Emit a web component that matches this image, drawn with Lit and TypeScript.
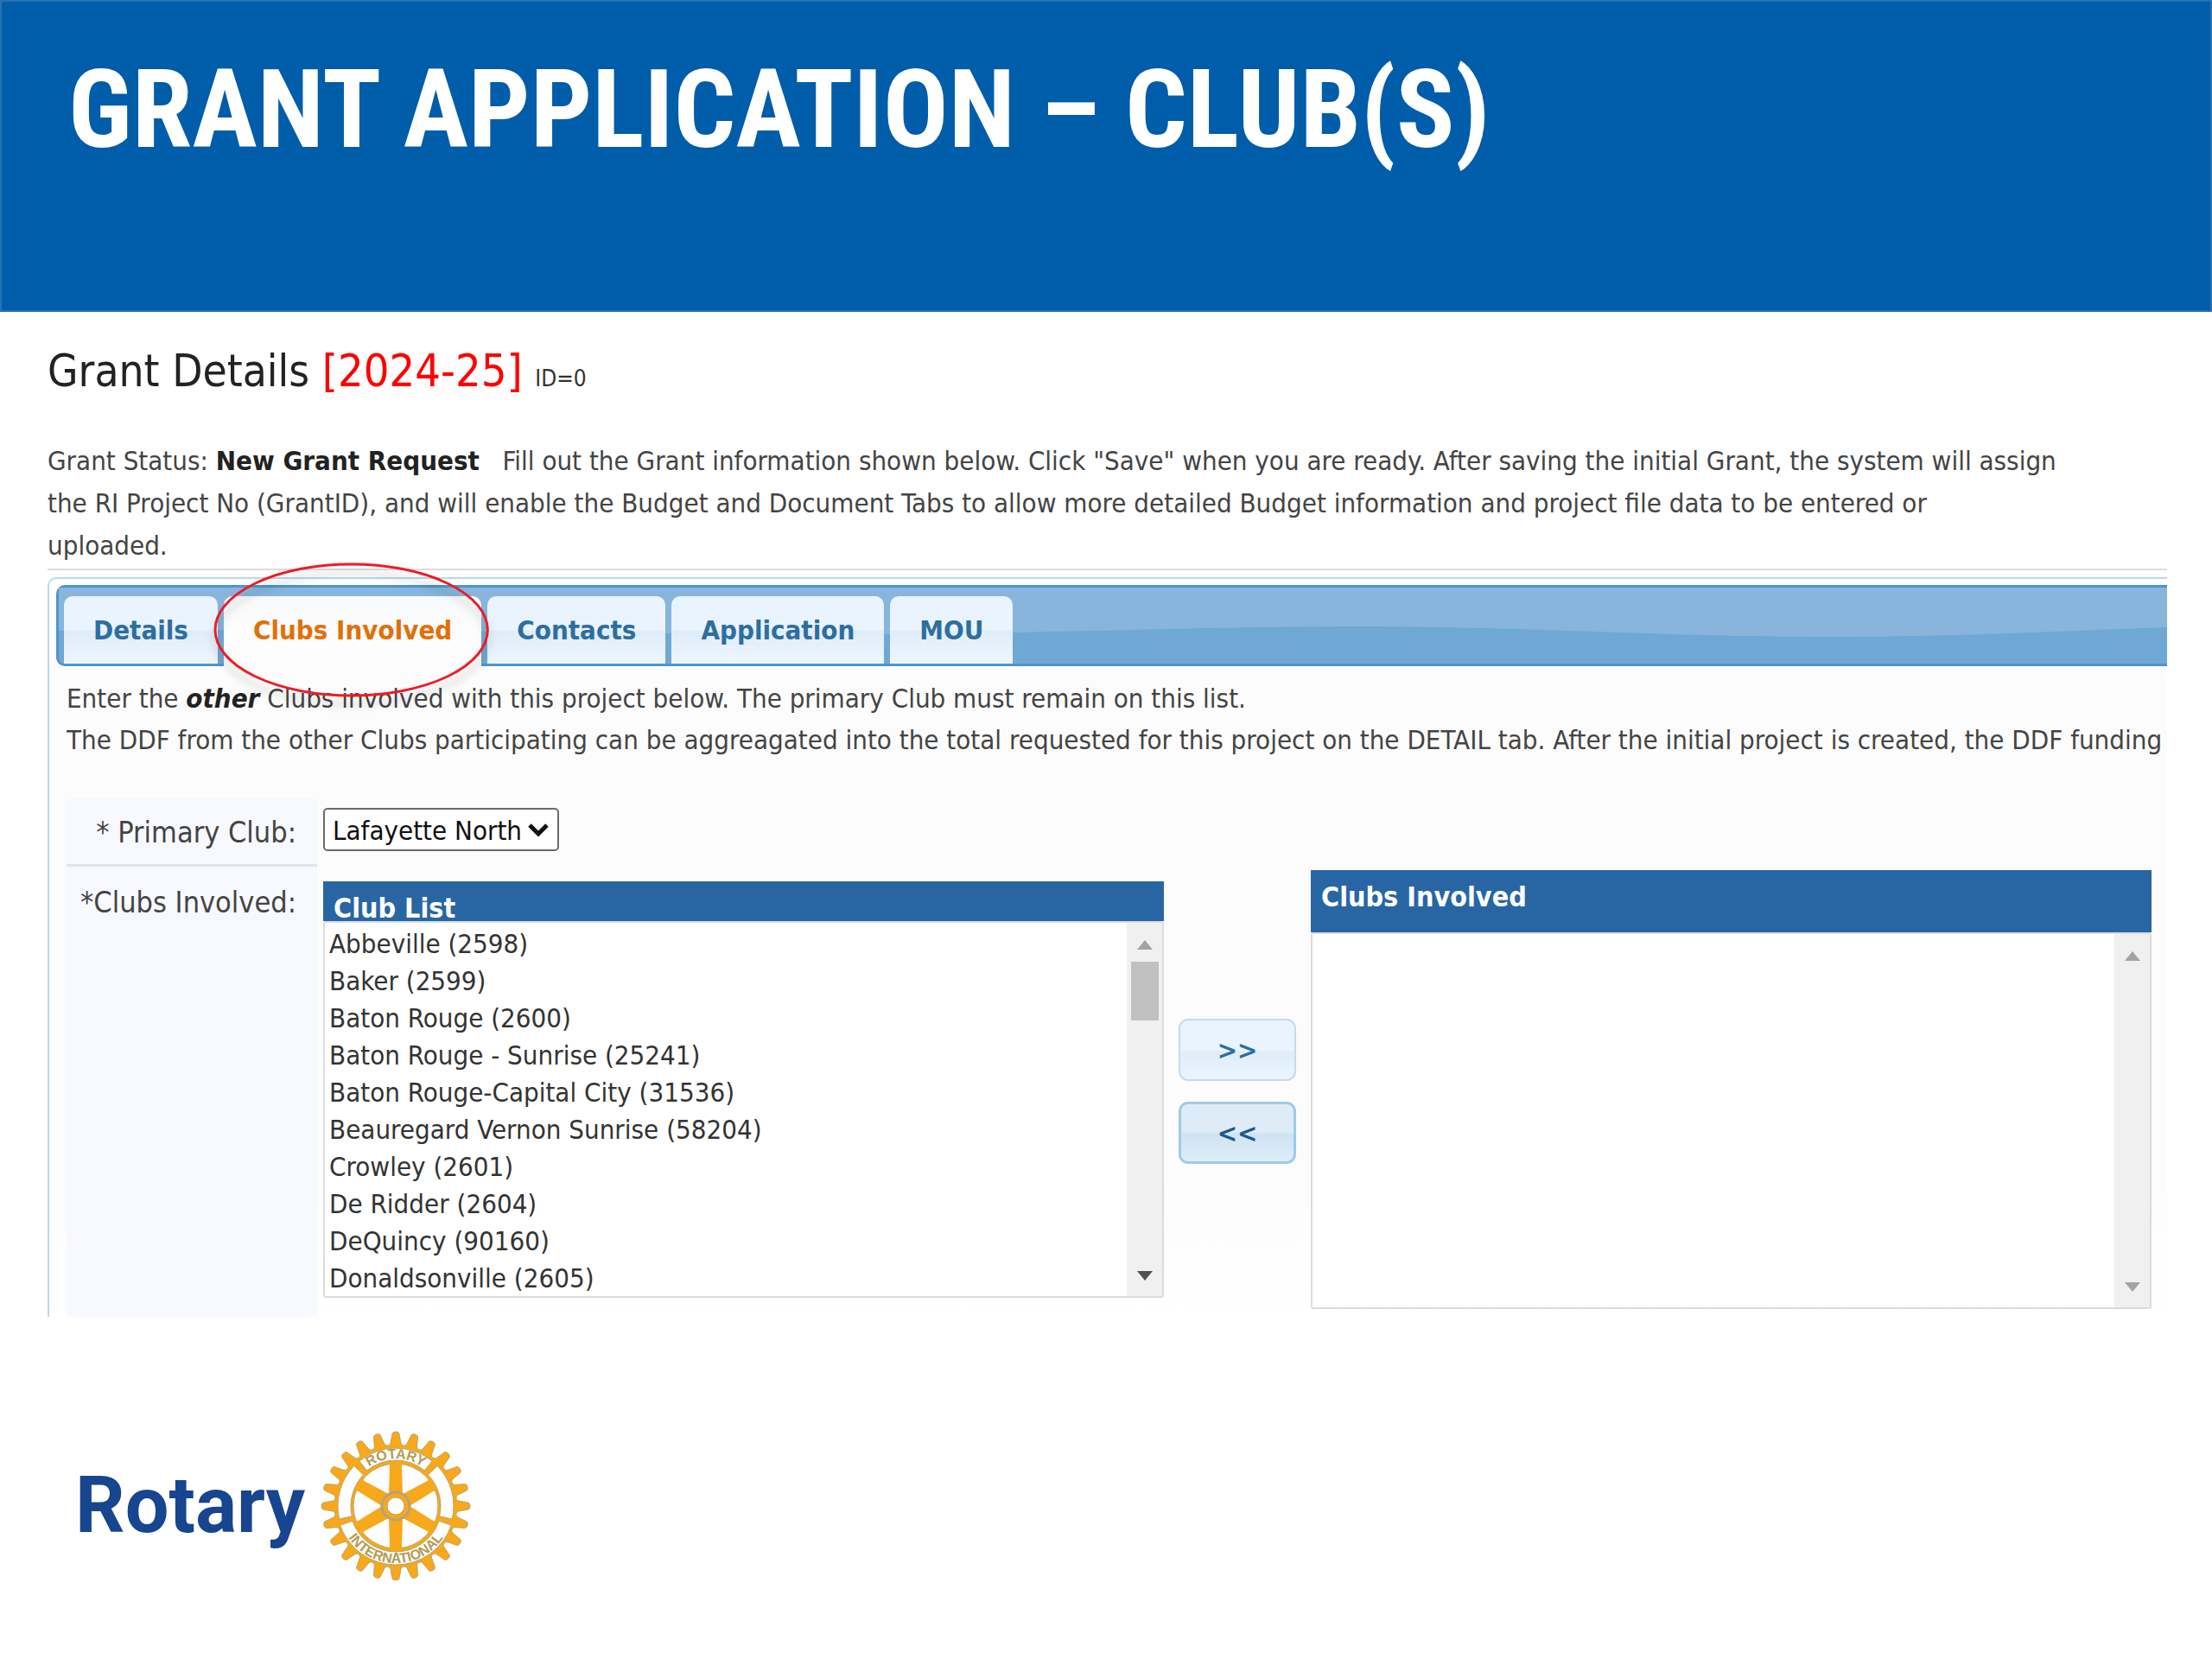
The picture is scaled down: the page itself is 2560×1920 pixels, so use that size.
import { LitElement, html, svg, css } from "lit";
import { customElement, property, state } from "lit/decorators.js";
import { classMap } from "lit/directives/class-map.js";

const CLUBS = [
  "Abbeville (2598)",
  "Baker (2599)",
  "Baton Rouge (2600)",
  "Baton Rouge - Sunrise (25241)",
  "Baton Rouge-Capital City (31536)",
  "Beauregard Vernon Sunrise (58204)",
  "Crowley (2601)",
  "De Ridder (2604)",
  "DeQuincy (90160)",
  "Donaldsonville (2605)",
];

const TABS = ["Details", "Clubs Involved", "Contacts", "Application", "MOU"];

/** Point on a circle around the wheel's centre; degrees run clockwise from the top. */
const polar = (r: number, deg: number): string => {
  const a = (deg * Math.PI) / 180;
  return `${(r * Math.sin(a)).toFixed(2)} ${(-r * Math.cos(a)).toFixed(2)}`;
};

/** Annular sector between two radii and two angles. */
const band = (r1: number, r2: number, from: number, to: number): string => {
  const large = to - from > 180 ? 1 : 0;
  return `M${polar(r2, from)}A${r2} ${r2} 0 ${large} 1 ${polar(r2, to)}L${polar(r1, to)}A${r1} ${r1} 0 ${large} 0 ${polar(r1, from)}Z`;
};

const gearOutline = (): string => {
  let d = "";
  for (let i = 0; i < 24; i++) {
    const c = i * 15;
    d += `${i ? "L" : "M"}${polar(72, c - 5)}L${polar(82, c - 3)}Q${polar(86, c - 3)} ${polar(86, c)}Q${polar(86, c + 3)} ${polar(82, c + 3)}L${polar(72, c + 5)}Q${polar(69, c + 7.5)} ${polar(72, c + 10)}`;
  }
  return d + "Z";
};

@customElement("rotary-logo")
export class RotaryLogo extends LitElement {
  static styles = css`
    :host {
      display: flex;
      align-items: center;
      gap: 19px;
    }
    .word {
      font: 700 90px/100px Roboto, "Open Sans", sans-serif;
      color: #17458f;
    }
    .wheel {
      width: 172px;
      height: 172px;
      overflow: visible;
    }
    .gold {
      fill: #f7a81b;
      stroke: #b9a56c;
    }
    .white {
      fill: #fff;
      stroke: #b9a56c;
    }
    .spoke {
      fill: #f7a81b;
    }
    .ring {
      fill: #f7a81b;
      stroke: #b3a47c;
      stroke-width: 3px;
    }
    .arc {
      fill: none;
    }
    .letters {
      font: 700 16px "Liberation Sans", Arial, sans-serif;
      fill: #b39c52;
    }
  `;

  render() {
    return html`
      <span class="word">Rotary</span>
      <svg class="wheel" viewBox="-86 -86 172 172" role="img" aria-label="Rotary International">
        <path class="gold" d=${gearOutline()} />
        <path class="white" d=${band(53, 67, -39, 39)} />
        <path class="white" d=${band(52, 67, 46, 103)} />
        <path class="white" d=${band(52, 67, -103, -46)} />
        <path class="white" d=${band(53, 68, 109, 251)} />
        <circle class="white" r="49" />
        ${[0, 60, 120, 180, 240, 300].map(
          (a) => svg`<path class="spoke" transform="rotate(${a})" d="M-8 -12L-7 -46Q-7 -49 -10 -50L10 -50Q7 -49 7 -46L8 -12Z" />`
        )}
        <circle class="ring" r="16" />
        <circle class="white" r="10" />
        <path class="arc" id="top" d="M${polar(55, -60)}A55 55 0 0 1 ${polar(55, 60)}" />
        <path class="arc" id="bottom" d="M${polar(66, 260)}A66 66 0 0 0 ${polar(66, 100)}" />
        <text class="letters" text-anchor="middle"><textPath href="#top" startOffset="50%">ROTARY</textPath></text>
        <text class="letters" text-anchor="middle"><textPath href="#bottom" startOffset="50%">INTERNATIONAL</textPath></text>
      </svg>
    `;
  }
}

@customElement("club-list")
export class ClubList extends LitElement {
  @property() heading = "";
  @property({ type: Boolean }) tall = false;
  @property({ attribute: false }) clubs: string[] = [];

  static styles = css`
    :host {
      display: block;
      flex: 1;
      min-width: 0;
      font-family: "DejaVu Sans Condensed", Tahoma, "Noto Sans", sans-serif;
    }
    .heading {
      display: block;
      box-sizing: border-box;
      height: 46px;
      padding: 14px 12px 0;
      background: #2866a3;
      color: #fff;
      font-weight: 700;
      font-size: 32px;
      line-height: 34px;
    }
    .heading.tall {
      height: 72px;
    }
    .box {
      display: flex;
      box-sizing: border-box;
      height: 436px;
      border: 2px solid #dcdcdc;
      border-radius: 3px;
      background: #fff;
    }
    .options {
      flex: 1;
      min-width: 0;
      height: 432px;
      margin: 0;
      padding: 6px 0 0;
      border: 0;
      outline: 0;
      overflow: hidden;
      scrollbar-width: none;
      background: #fff;
      font: 31px/43px "DejaVu Sans Condensed", Tahoma, "Noto Sans", sans-serif;
    }
    .option {
      height: 43px;
      min-height: 43px;
      padding: 0 5px;
      line-height: 43px;
      color: #333;
    }
    .scrollbar {
      display: flex;
      flex-direction: column;
      align-items: center;
      justify-content: space-between;
      width: 41px;
      background: #f0f0f0;
    }
    .top {
      display: flex;
      flex-direction: column;
      align-items: center;
      gap: 14px;
      padding-top: 20px;
    }
    .arrow {
      display: block;
      width: 18px;
      height: 11px;
      fill: #a3a3a3;
    }
    .down {
      margin-bottom: 18px;
    }
    .live {
      fill: #505050;
    }
    .thumb {
      width: 32px;
      height: 68px;
      background: #c1c1c1;
    }
  `;

  render() {
    const full = this.clubs.length > 0;
    return html`
      <label class=${classMap({ heading: true, tall: this.tall })} for="options">${this.heading}</label>
      <div class="box">
        <select class="options" id="options" multiple size="10">
          ${this.clubs.map((c) => html`<option class="option">${c}</option>`)}
        </select>
        <div class="scrollbar" aria-hidden="true">
          <div class="top">
            <svg class="arrow" viewBox="0 0 18 11"><path d="M9 0L18 11H0Z" /></svg>
            ${full ? html`<div class="thumb"></div>` : ""}
          </div>
          <svg class=${classMap({ arrow: true, down: true, live: full })} viewBox="0 0 18 11"><path d="M0 0H18L9 11Z" /></svg>
        </div>
      </div>
    `;
  }
}

@customElement("app-root")
export class AppRoot extends LitElement {
  @state() private active = "Clubs Involved";

  static styles = css`
    :host {
      display: block;
      background: #fff;
      color: #444;
      font: 31px/48px "DejaVu Sans Condensed", Tahoma, "Noto Sans", sans-serif;
    }
    .banner {
      box-sizing: border-box;
      height: 361px;
      padding: 51px 77px 0;
      border: 2px solid #2b6fb5;
      background: #005daa;
    }
    .title {
      margin: 0;
      color: #fff;
      font: 700 126px/148px "Roboto Condensed", "Liberation Sans", sans-serif;
    }
    .page {
      padding: 38px 52px 0 55px;
    }
    .heading {
      margin: 0 0 41px;
      color: #222;
      font-weight: 400;
      font-size: 51px;
      line-height: 60px;
    }
    .year {
      color: #f00;
      font-size: 52px;
    }
    .id {
      font-size: 26px;
      color: #333;
    }
    .status {
      margin: 0 0 2px;
      line-height: 49px;
    }
    .strong {
      color: #222;
    }
    .rule {
      height: 2px;
      margin: 0 0 8px;
      border: 0;
      background: #dcdcdc;
    }
    .widget {
      padding: 7px 0 0 8px;
      border: solid #b9d8ea;
      border-width: 2px 0 0 2px;
      border-radius: 10px 0 0 0;
      background: linear-gradient(#fff 50px, #fcfcfc 120px, #fcfcfc 700px, #fff);
    }
    .tabs {
      position: relative;
      display: flex;
      gap: 7px;
      box-sizing: border-box;
      height: 94px;
      padding: 10px 0 0 6px;
      border: solid #4c95cf;
      border-width: 3px 0 3px 3px;
      border-radius: 10px 0 0 10px;
      background: #6fa8d4;
    }
    .wave {
      position: absolute;
      inset: 0;
      width: 100%;
      height: 100%;
    }
    .crest {
      fill: #87b5db;
    }
    .tab {
      position: relative;
      height: 78px;
      margin: 0;
      padding: 0 34px;
      border: 0;
      border-radius: 10px 10px 0 0;
      background: linear-gradient(#e9f4ff 0 50%, #deedfa 52%, #edf6fe);
      color: #2e6e9e;
      font: inherit;
      font-weight: 700;
      line-height: 76px;
    }
    .active {
      height: 82px;
      padding-bottom: 4px;
      background: linear-gradient(#f7f9fb, #fcfcfc 40%);
      color: #e17009;
    }
    .ring {
      position: absolute;
      left: -12px;
      top: -40px;
      width: calc(100% + 22px);
      height: 160px;
      overflow: visible;
      pointer-events: none;
      z-index: 1;
      filter: drop-shadow(0 10px 5px rgba(0, 0, 0, 0.2));
    }
    .oval {
      fill: none;
      stroke: #ee1c24;
      stroke-width: 3px;
    }
    .panel {
      padding: 13px 0 0 12px;
    }
    .intro {
      margin: 0 0 44px;
      overflow: hidden;
      white-space: nowrap;
    }
    .form {
      display: grid;
      grid-template-columns: 290px minmax(0, 1fr);
      column-gap: 7px;
    }
    .label {
      box-sizing: border-box;
      padding: 17px 24px 0 0;
      background: #f8f9ff;
      text-align: right;
      font-size: 34px;
    }
    .first {
      height: 79px;
      padding-top: 15px;
      border-bottom: 3px solid #e0e3ea;
    }
    .field {
      display: flex;
      align-items: flex-start;
      padding-top: 11px;
    }
    .picker {
      position: relative;
      display: block;
    }
    .select {
      appearance: none;
      box-sizing: border-box;
      width: 273px;
      height: 50px;
      margin: 0;
      padding: 0 34px 0 9px;
      border: 2px solid #6b6b6b;
      border-radius: 5px;
      background: #fff;
      color: #111;
      font: inherit;
    }
    .chevron {
      position: absolute;
      right: 12px;
      top: 18px;
      width: 24px;
      height: 16px;
      fill: none;
      stroke: #111;
      stroke-width: 5px;
      pointer-events: none;
    }
    .transfer {
      display: flex;
      align-items: flex-start;
      gap: 17px;
      height: 521px;
      padding-right: 18px;
    }
    .available {
      margin-top: 17px;
    }
    .chosen {
      margin-top: 4px;
    }
    .moves {
      display: flex;
      flex-direction: column;
      gap: 24px;
      padding-top: 176px;
    }
    .move {
      width: 136px;
      height: 72px;
      margin: 0;
      padding: 0;
      border: 2px solid #c5dbec;
      border-radius: 11px;
      background: linear-gradient(#e9f4ff 0 50%, #dfedfa 54%, #ebf5fe);
      color: #2e6e9e;
      font: inherit;
      font-weight: 700;
    }
    .hover {
      border: 3px solid #9ccbe9;
      background: linear-gradient(#dfecf7 0 48%, #d0e3f3 52%, #dfedf9);
      color: #1d5987;
    }
    .footer {
      padding: 133px 87px 0;
    }
  `;

  private renderTab(name: string) {
    const on = name === this.active;
    return html`<button
      class=${classMap({ tab: true, active: on })}
      role="tab"
      aria-selected=${on ? "true" : "false"}
      @click=${() => (this.active = name)}
    >${name}${name === "Clubs Involved"
      ? html`<svg class="ring" viewBox="0 0 323 160" preserveAspectRatio="none" aria-hidden="true">
          <ellipse class="oval" cx="161" cy="79" rx="159" ry="76" />
        </svg>`
      : ""}</button>`;
  }

  render() {
    return html`
      <header class="banner"><h1 class="title">GRANT APPLICATION – CLUB(S)</h1></header>
      <main class="page">
        <h2 class="heading">Grant Details <span class="year">[2024-25]</span> <span class="id">ID=0</span></h2>
        <p class="status">
          Grant Status: <b class="strong">New Grant Request</b> &nbsp; Fill out the Grant information shown below. Click "Save" when you are ready. After saving the initial Grant, the system will assign<br />
          the RI Project No (GrantID), and will enable the Budget and Document Tabs to allow more detailed Budget information and project file data to be entered or<br />
          uploaded.
        </p>
        <hr class="rule" />
        <section class="widget">
          <div class="tabs" role="tablist">
            <svg class="wave" viewBox="0 0 2440 88" preserveAspectRatio="none" aria-hidden="true">
              <path class="crest" d="M0 0H2440V46C2320 50 2200 57 2050 57C1850 57 1700 45 1500 45C1300 45 1150 54 900 54C600 54 300 45 0 50Z" />
            </svg>
            ${TABS.map((t) => this.renderTab(t))}
          </div>
          <div class="panel" role="tabpanel">
            <p class="intro">
              Enter the <b class="strong"><i>other</i></b> Clubs involved with this project below. The primary Club must remain on this list.<br />
              The DDF from the other Clubs participating can be aggreagated into the total requested for this project on the DETAIL tab. After the initial project is created, the DDF funding
            </p>
            <div class="form">
              <label class="label first" for="primary">* Primary Club:</label>
              <div class="field">
                <span class="picker">
                  <select class="select" id="primary"><option>Lafayette North</option></select>
                  <svg class="chevron" viewBox="0 0 24 16" aria-hidden="true"><path d="M2 2L12 12L22 2" /></svg>
                </span>
              </div>
              <div class="label">*Clubs Involved:</div>
              <div class="transfer">
                <club-list class="available" heading="Club List" .clubs=${CLUBS}></club-list>
                <div class="moves">
                  <button class="move" aria-label="Add club">&gt;&gt;</button>
                  <button class="move hover" aria-label="Remove club">&lt;&lt;</button>
                </div>
                <club-list class="chosen" heading="Clubs Involved" tall></club-list>
              </div>
            </div>
          </div>
        </section>
      </main>
      <footer class="footer"><rotary-logo></rotary-logo></footer>
    `;
  }
}
